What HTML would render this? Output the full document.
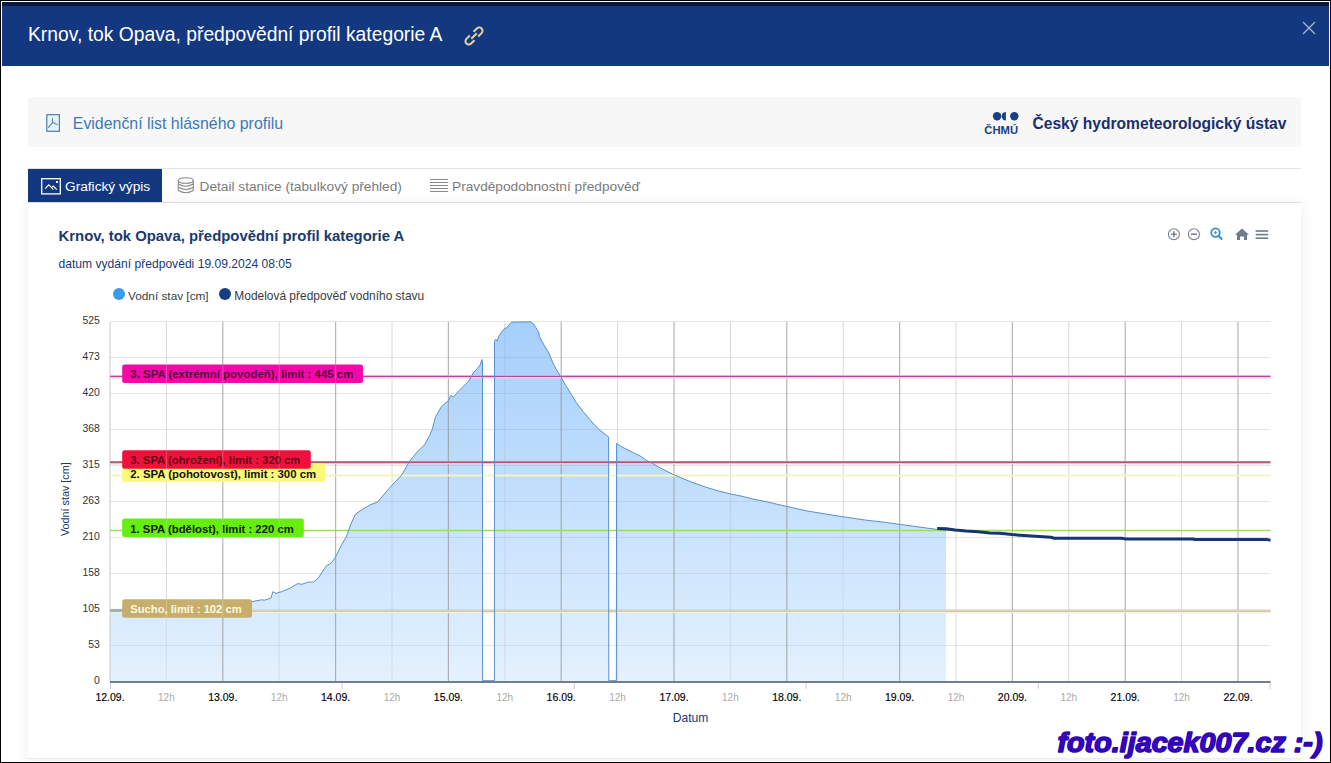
<!DOCTYPE html>
<html><head><meta charset="utf-8">
<style>
html,body{margin:0;padding:0;}
body{width:1331px;height:763px;overflow:hidden;position:relative;background:#fff;font-family:"Liberation Sans",sans-serif;}
.abs{position:absolute;}
#frame{position:absolute;left:0;top:0;width:1329px;height:761px;border:1px solid #000;}
#hdr{position:absolute;left:2px;top:2px;width:1327px;height:63.5px;background:#14387f;}
#hdrtop{position:absolute;left:2px;top:2px;width:1327px;height:4px;background:#08173d;}
#title{position:absolute;left:28px;top:23px;font-size:19.3px;color:#fff;white-space:nowrap;line-height:24px;}
#bar{position:absolute;left:28px;top:97px;width:1273px;height:50px;background:#f7f7f7;}
#evid{position:absolute;left:72.8px;top:113.8px;font-size:15.9px;color:#3a7ab8;white-space:nowrap;line-height:20px;}
#chmu{position:absolute;left:1032.5px;top:113.5px;font-size:15.6px;font-weight:bold;color:#19306c;white-space:nowrap;line-height:20px;}
#tabline1{position:absolute;left:28px;top:168px;width:1273px;height:1px;background:#e3e3e3;}
#tabline2{position:absolute;left:28px;top:202px;width:1273px;height:1px;background:#e3e3e3;}
#tab1{position:absolute;left:28px;top:169px;width:134px;height:33px;background:#14387f;}
.tabt{position:absolute;top:178px;font-size:13.7px;white-space:nowrap;line-height:18px;}
#card{position:absolute;left:28px;top:203px;width:1273px;height:556px;background:#fff;box-shadow:0 1px 13px rgba(0,0,0,0.075);}
#cardbot{position:absolute;left:28px;top:758px;width:1273px;height:1px;background:#ececec;}
svg text{font-family:"Liberation Sans",sans-serif;}
.gh{stroke:#e6e6e6;stroke-width:1;}
.fg line{stroke:rgba(110,120,140,0.14)!important;}
.gd{stroke:rgba(150,150,150,0.7);stroke-width:1.2;}
.g12{stroke:rgba(190,190,190,0.6);stroke-width:1;}
.yl{font-size:10.4px;fill:#333;text-anchor:end;}
.xd{font-size:10.5px;fill:#000;text-anchor:middle;stroke:#000;stroke-width:0.15px;}
.xh{font-size:10px;fill:#aaaaaa;text-anchor:middle;}
.wl line{stroke:rgba(255,255,255,0.22)!important;}
.al{font-weight:bold;}
#wm{position:absolute;left:1057px;top:724px;font-size:30px;font-weight:bold;font-style:italic;color:#3b12c4;white-space:nowrap;line-height:36px;font-family:"Liberation Sans",sans-serif;letter-spacing:-0.5px;}
</style></head><body>
<div id="frame"></div>
<div id="hdr"></div>
<div id="hdrtop"></div>
<div id="title">Krnov, tok Opava, předpovědní profil kategorie A</div>
<svg class="abs" style="left:0;top:0" width="1331" height="80">
  <!-- link icon -->
  <g transform="translate(474,36) rotate(-45)" fill="none" stroke="#e3d39c" stroke-width="2" stroke-linecap="butt">
    <path d="M2.6,-3.3 L7.4,-3.3 A3.3,3.3 0 0 1 7.4,3.3 L2.6,3.3"/>
    <path d="M-2.6,-3.3 L-7.4,-3.3 A3.3,3.3 0 0 0 -7.4,3.3 L-2.6,3.3"/>
    <path d="M-3.8,0 L3.9,0"/>
  </g>
  <g stroke="#a9b6d6" stroke-width="1.2">
    <line x1="1303" y1="22" x2="1315" y2="34"/><line x1="1315" y1="22" x2="1303" y2="34"/>
  </g>
</svg>
<div id="bar"></div>
<svg class="abs" style="left:0;top:90px" width="1331" height="60">
  <!-- pdf icon -->
  <rect x="46.8" y="24.7" width="12.6" height="16.6" fill="#e6f4fa" stroke="#4f7ea6" stroke-width="1.2"/>
  <g fill="none" stroke="#5a86ad" stroke-width="1.1" stroke-linecap="round">
    <path d="M52.4,28.4 L52.4,32.6 L48.6,37.4 M52.4,32.6 L57.4,34.4"/>
  </g>
  <!-- CHMU logo -->
  <g fill="#1c3e85">
    <circle cx="997.1" cy="26.2" r="4.2"/>
    <path d="M1005.9,22 A4.2,4.2 0 0 0 1005.9,30.4 Z"/>
    <circle cx="1014.3" cy="26.2" r="4.2"/>
  </g>
  <text x="984.3" y="43.7" font-size="10.4" font-weight="bold" fill="#1c3e85" textLength="33.8" lengthAdjust="spacingAndGlyphs" style="font-family:'Liberation Sans',sans-serif">ČHMÚ</text>
</svg>
<div id="evid">Evidenční list hlásného profilu</div>
<div id="chmu">Český hydrometeorologický ústav</div>
<div id="tabline1"></div>
<div id="tab1"></div>
<div id="tabline2"></div>
<svg class="abs" style="left:0;top:165px" width="700" height="40">
  <!-- graph icon -->
  <rect x="41.7" y="13.7" width="18.6" height="15.2" fill="none" stroke="#fff" stroke-width="1.3"/>
  <path d="M45.2,23.6 L48.8,19.9 L53.4,24.6 M51.6,22.6 L53.3,21 L56.8,24.6" fill="none" stroke="#fff" stroke-width="1.1"/>
  <rect x="56" y="16" width="2" height="2" fill="#fff"/>
  <!-- db icon -->
  <g fill="none" stroke="#888" stroke-width="1.1">
    <ellipse cx="185.8" cy="15.5" rx="7.5" ry="2.8"/>
    <path d="M178.3,15.5 V25.5 Q185.8,30 193.3,25.5 V15.5"/>
    <path d="M178.3,19 Q185.8,23.5 193.3,19"/>
    <path d="M178.3,22.3 Q185.8,26.8 193.3,22.3"/>
  </g>
  <!-- list icon -->
  <g stroke="#888" stroke-width="1">
    <line x1="430" y1="14.5" x2="448" y2="14.5"/>
    <line x1="430" y1="17.5" x2="448" y2="17.5"/>
    <line x1="430" y1="20.5" x2="448" y2="20.5"/>
    <line x1="430" y1="23.5" x2="448" y2="23.5"/>
    <line x1="430" y1="26.5" x2="448" y2="26.5"/>
  </g>
</svg>
<div class="tabt" style="left:65px;color:#fff">Grafický výpis</div>
<div class="tabt" style="left:199.5px;color:#7b7b7b">Detail stanice (tabulkový přehled)</div>
<div class="tabt" style="left:452px;color:#7b7b7b">Pravděpodobnostní předpověď</div>
<div id="card"></div>
<div id="cardbot"></div>
<svg class="abs" style="left:0;top:0" width="1331" height="763">
  <defs>
    <linearGradient id="gf" x1="0" y1="322" x2="0" y2="682" gradientUnits="userSpaceOnUse">
      <stop offset="0" stop-color="#a5cffb"/>
      <stop offset="1" stop-color="#e4f1fe"/>
    </linearGradient>
    <clipPath id="boxclip"><rect x="122.2" y="364.4" width="240.8" height="18.5"/><rect x="122.2" y="463.6" width="202.9" height="18.5"/><rect x="122.2" y="450.2" width="188.6" height="18.5"/><rect x="122.2" y="518.5" width="181.6" height="18.5"/><rect x="122.2" y="599.2" width="129.8" height="18.5"/></clipPath>
    <clipPath id="fillclip"><path d="M110,682 L110,611.2 122,611 160,607.5 200,605 230,603 252.3,601.6 261.6,599.8 264.5,600.2 271,598 272.9,591.6 276,593.4 281.8,591.6 290.5,587.9 297.7,583.6 302,584.3 307.8,582.2 313.5,581.9 317.9,578.6 322.2,572.1 326.5,565.6 330.8,563.4 335.2,557.7 340.9,546.1 346.7,536 351,523.8 355.3,514.4 362.5,509.4 369.8,505 377.7,501.9 387,490.8 395.6,481.4 401.5,475.4 409.2,461.8 416,453.3 424.5,444.8 429.7,435.4 432.2,429.4 435.6,416.6 441.6,406.4 448.4,400.5 451,395.3 453.5,397 458.6,391.1 468.9,380.9 473.7,372.4 477.3,368.7 480.1,365 481.9,359.5 482.5,362 482.6,680.7 494.4,680.7 494.5,340.6 495.8,339.2 497.1,341.2 499.1,336 501.7,332 504.3,328.8 507,327.5 508.9,324.8 511.6,322.2 522.7,321.9 530.6,321.9 533.2,323.5 535.8,327.5 537.8,330.7 538.8,332.7 539.4,336.6 543.7,344.5 548.9,353 552.9,362.9 556.8,370.1 560.7,376.6 566,385.8 571.2,394.3 576.5,402.9 583,411.4 589.6,419.3 594.8,425.2 600.1,430.4 605.3,434.3 608.6,437 608.8,680.7 616.4,680.7 616.6,443.4 622,447 628,450 634,453 641.3,456.6 646.1,460.2 652.1,463.2 660.5,468.1 672.5,474.1 682.1,478.3 694.1,483.1 706.2,487.3 718.2,490.9 730.2,493.9 742.2,496.3 754.2,499.3 765,501.4 786.4,506.4 807.8,511.1 829.2,514.6 843.5,516.8 864.9,520 886.3,522.5 900.6,524.5 922,527.4 936.3,529.3 946,530.5 L946,682 Z"/></clipPath>
  </defs>
  <text x="58.5" y="241" font-size="14.9" font-weight="bold" fill="#1a3a6e">Krnov, tok Opava, předpovědní profil kategorie A</text>
  <text x="58.5" y="267.6" font-size="12.1" fill="#1a3a6e">datum vydání předpovědi 19.09.2024 08:05</text>
  <circle cx="119" cy="294" r="6" fill="#3a9af0"/>
  <text x="128" y="300" font-size="11.8" fill="#373d3f">Vodní stav [cm]</text>
  <circle cx="225" cy="294" r="6" fill="#173d84"/>
  <text x="234.3" y="300" font-size="11.95" fill="#373d3f">Modelová předpověď vodního stavu</text>
  <!-- toolbar -->
  <g fill="none" stroke="#6e7b8b" stroke-width="1.05">
    <circle cx="1173.9" cy="234.2" r="5.5"/>
    <line x1="1170.9" y1="234.2" x2="1176.9" y2="234.2" stroke-width="1.3"/>
    <line x1="1173.9" y1="231.2" x2="1173.9" y2="237.2" stroke-width="1.5"/>
    <circle cx="1193.9" cy="234.2" r="5.5"/>
    <line x1="1190.9" y1="234.2" x2="1196.9" y2="234.2" stroke-width="1.5"/>
  </g>
  <g fill="none" stroke="#2f8fd6" stroke-width="1.8">
    <circle cx="1215.5" cy="232.6" r="4.3"/>
    <line x1="1218.6" y1="235.8" x2="1222.3" y2="239.6" stroke-width="2"/>
  </g>
  <g stroke="#2f8fd6" stroke-width="0.9"><line x1="1213.8" y1="232.6" x2="1217.2" y2="232.6"/><line x1="1215.5" y1="230.9" x2="1215.5" y2="234.3"/></g>
  <path d="M1242,228.5 L1249,234.8 L1247,234.8 L1247,240 L1244,240 L1244,236.5 L1240,236.5 L1240,240 L1237,240 L1237,234.8 L1235,234.8 Z" fill="#6e7b8b"/>
  <g stroke="#6e7b8b" stroke-width="1.6">
    <line x1="1255.6" y1="231" x2="1268.2" y2="231"/>
    <line x1="1255.6" y1="234.6" x2="1268.2" y2="234.6"/>
    <line x1="1255.6" y1="238.2" x2="1268.2" y2="238.2"/>
  </g>
  <!-- plot -->
  <line x1="110" y1="321.5" x2="1270.5" y2="321.5" class="gh"/>
<line x1="110" y1="357.5" x2="1270.5" y2="357.5" class="gh"/>
<line x1="110" y1="393.5" x2="1270.5" y2="393.5" class="gh"/>
<line x1="110" y1="429.5" x2="1270.5" y2="429.5" class="gh"/>
<line x1="110" y1="465.5" x2="1270.5" y2="465.5" class="gh"/>
<line x1="110" y1="501.5" x2="1270.5" y2="501.5" class="gh"/>
<line x1="110" y1="537.5" x2="1270.5" y2="537.5" class="gh"/>
<line x1="110" y1="573.5" x2="1270.5" y2="573.5" class="gh"/>
<line x1="110" y1="609.5" x2="1270.5" y2="609.5" class="gh"/>
<line x1="110" y1="645.5" x2="1270.5" y2="645.5" class="gh"/>
<line x1="110" y1="681.5" x2="1270.5" y2="681.5" class="gh"/>
  <line x1="166.4" y1="322" x2="166.4" y2="682" class="g12"/>
<line x1="279.2" y1="322" x2="279.2" y2="682" class="g12"/>
<line x1="392.0" y1="322" x2="392.0" y2="682" class="g12"/>
<line x1="504.8" y1="322" x2="504.8" y2="682" class="g12"/>
<line x1="617.6" y1="322" x2="617.6" y2="682" class="g12"/>
<line x1="730.4" y1="322" x2="730.4" y2="682" class="g12"/>
<line x1="843.2" y1="322" x2="843.2" y2="682" class="g12"/>
<line x1="956.0" y1="322" x2="956.0" y2="682" class="g12"/>
<line x1="1068.8" y1="322" x2="1068.8" y2="682" class="g12"/>
<line x1="1181.6" y1="322" x2="1181.6" y2="682" class="g12"/>
  <path d="M110,682 L110,611.2 122,611 160,607.5 200,605 230,603 252.3,601.6 261.6,599.8 264.5,600.2 271,598 272.9,591.6 276,593.4 281.8,591.6 290.5,587.9 297.7,583.6 302,584.3 307.8,582.2 313.5,581.9 317.9,578.6 322.2,572.1 326.5,565.6 330.8,563.4 335.2,557.7 340.9,546.1 346.7,536 351,523.8 355.3,514.4 362.5,509.4 369.8,505 377.7,501.9 387,490.8 395.6,481.4 401.5,475.4 409.2,461.8 416,453.3 424.5,444.8 429.7,435.4 432.2,429.4 435.6,416.6 441.6,406.4 448.4,400.5 451,395.3 453.5,397 458.6,391.1 468.9,380.9 473.7,372.4 477.3,368.7 480.1,365 481.9,359.5 482.5,362 482.6,680.7 494.4,680.7 494.5,340.6 495.8,339.2 497.1,341.2 499.1,336 501.7,332 504.3,328.8 507,327.5 508.9,324.8 511.6,322.2 522.7,321.9 530.6,321.9 533.2,323.5 535.8,327.5 537.8,330.7 538.8,332.7 539.4,336.6 543.7,344.5 548.9,353 552.9,362.9 556.8,370.1 560.7,376.6 566,385.8 571.2,394.3 576.5,402.9 583,411.4 589.6,419.3 594.8,425.2 600.1,430.4 605.3,434.3 608.6,437 608.8,680.7 616.4,680.7 616.6,443.4 622,447 628,450 634,453 641.3,456.6 646.1,460.2 652.1,463.2 660.5,468.1 672.5,474.1 682.1,478.3 694.1,483.1 706.2,487.3 718.2,490.9 730.2,493.9 742.2,496.3 754.2,499.3 765,501.4 786.4,506.4 807.8,511.1 829.2,514.6 843.5,516.8 864.9,520 886.3,522.5 900.6,524.5 922,527.4 936.3,529.3 946,530.5 L946,682 Z" fill="url(#gf)"/>
  <g clip-path="url(#fillclip)" class="fg"><line x1="166.4" y1="322" x2="166.4" y2="682" class="g12"/>
<line x1="279.2" y1="322" x2="279.2" y2="682" class="g12"/>
<line x1="392.0" y1="322" x2="392.0" y2="682" class="g12"/>
<line x1="504.8" y1="322" x2="504.8" y2="682" class="g12"/>
<line x1="617.6" y1="322" x2="617.6" y2="682" class="g12"/>
<line x1="730.4" y1="322" x2="730.4" y2="682" class="g12"/>
<line x1="843.2" y1="322" x2="843.2" y2="682" class="g12"/>
<line x1="956.0" y1="322" x2="956.0" y2="682" class="g12"/>
<line x1="1068.8" y1="322" x2="1068.8" y2="682" class="g12"/>
<line x1="1181.6" y1="322" x2="1181.6" y2="682" class="g12"/></g>
  <line x1="222.8" y1="322" x2="222.8" y2="682" class="gd"/>
<line x1="335.6" y1="322" x2="335.6" y2="682" class="gd"/>
<line x1="448.4" y1="322" x2="448.4" y2="682" class="gd"/>
<line x1="561.2" y1="322" x2="561.2" y2="682" class="gd"/>
<line x1="674.0" y1="322" x2="674.0" y2="682" class="gd"/>
<line x1="786.8" y1="322" x2="786.8" y2="682" class="gd"/>
<line x1="899.6" y1="322" x2="899.6" y2="682" class="gd"/>
<line x1="1012.4" y1="322" x2="1012.4" y2="682" class="gd"/>
<line x1="1125.2" y1="322" x2="1125.2" y2="682" class="gd"/>
<line x1="1238.0" y1="322" x2="1238.0" y2="682" class="gd"/>
  <line x1="110" y1="322" x2="110" y2="682" stroke="#c8c8c8" stroke-width="1"/>
  <line x1="110" y1="376.79999999999995" x2="1270.5" y2="376.79999999999995" stroke="#fbc4ee" stroke-width="3.2"/>
<line x1="110" y1="376.4" x2="1270.5" y2="376.4" stroke="#b5489a" stroke-width="1.3"/>
<line x1="110" y1="475.6" x2="1270.5" y2="475.6" stroke="#f5f5c2" stroke-width="2"/>
<line x1="110" y1="462.59999999999997" x2="1270.5" y2="462.59999999999997" stroke="#f3bfd2" stroke-width="3.2"/>
<line x1="110" y1="462.2" x2="1270.5" y2="462.2" stroke="#963656" stroke-width="1.3"/>
<line x1="110" y1="530.5" x2="1270.5" y2="530.5" stroke="#98e060" stroke-width="1.6"/>
<line x1="110" y1="611.6" x2="1270.5" y2="611.6" stroke="#f4efdc" stroke-width="3.2"/>
<line x1="110" y1="611.2" x2="1270.5" y2="611.2" stroke="#c6bb96" stroke-width="1.3"/>
  <g clip-path="url(#fillclip)" class="fg"><line x1="110" y1="321.5" x2="1270.5" y2="321.5" class="gh"/>
<line x1="110" y1="357.5" x2="1270.5" y2="357.5" class="gh"/>
<line x1="110" y1="393.5" x2="1270.5" y2="393.5" class="gh"/>
<line x1="110" y1="429.5" x2="1270.5" y2="429.5" class="gh"/>
<line x1="110" y1="465.5" x2="1270.5" y2="465.5" class="gh"/>
<line x1="110" y1="501.5" x2="1270.5" y2="501.5" class="gh"/>
<line x1="110" y1="537.5" x2="1270.5" y2="537.5" class="gh"/>
<line x1="110" y1="573.5" x2="1270.5" y2="573.5" class="gh"/>
<line x1="110" y1="609.5" x2="1270.5" y2="609.5" class="gh"/>
<line x1="110" y1="645.5" x2="1270.5" y2="645.5" class="gh"/>
<line x1="110" y1="681.5" x2="1270.5" y2="681.5" class="gh"/></g>
  <path d="M110,611.2 122,611 160,607.5 200,605 230,603 252.3,601.6 261.6,599.8 264.5,600.2 271,598 272.9,591.6 276,593.4 281.8,591.6 290.5,587.9 297.7,583.6 302,584.3 307.8,582.2 313.5,581.9 317.9,578.6 322.2,572.1 326.5,565.6 330.8,563.4 335.2,557.7 340.9,546.1 346.7,536 351,523.8 355.3,514.4 362.5,509.4 369.8,505 377.7,501.9 387,490.8 395.6,481.4 401.5,475.4 409.2,461.8 416,453.3 424.5,444.8 429.7,435.4 432.2,429.4 435.6,416.6 441.6,406.4 448.4,400.5 451,395.3 453.5,397 458.6,391.1 468.9,380.9 473.7,372.4 477.3,368.7 480.1,365 481.9,359.5 482.5,362 482.6,680.7 494.4,680.7 494.5,340.6 495.8,339.2 497.1,341.2 499.1,336 501.7,332 504.3,328.8 507,327.5 508.9,324.8 511.6,322.2 522.7,321.9 530.6,321.9 533.2,323.5 535.8,327.5 537.8,330.7 538.8,332.7 539.4,336.6 543.7,344.5 548.9,353 552.9,362.9 556.8,370.1 560.7,376.6 566,385.8 571.2,394.3 576.5,402.9 583,411.4 589.6,419.3 594.8,425.2 600.1,430.4 605.3,434.3 608.6,437 608.8,680.7 616.4,680.7 616.6,443.4 622,447 628,450 634,453 641.3,456.6 646.1,460.2 652.1,463.2 660.5,468.1 672.5,474.1 682.1,478.3 694.1,483.1 706.2,487.3 718.2,490.9 730.2,493.9 742.2,496.3 754.2,499.3 765,501.4 786.4,506.4 807.8,511.1 829.2,514.6 843.5,516.8 864.9,520 886.3,522.5 900.6,524.5 922,527.4 936.3,529.3 946,530.5" fill="none" stroke="#5a8fcc" stroke-width="1" stroke-linejoin="round"/>
  <path d="M937.2,528.4 946.2,528.7 955.2,529.9 966.1,531.1 978.1,531.7 990.1,532.9 1000,533.2 1012,534.6 1024,535.5 1039.1,536.4 1051.1,537.3 1054.1,538.2 1068.8,538.3 1122,538.3 1125,538.9 1193.5,538.9 1194.3,539.4 1266.4,539.4 1270.5,540.2" fill="none" stroke="#17356f" stroke-width="3" stroke-linejoin="round" stroke-linecap="butt"/>
  <line x1="110.5" y1="610.4" x2="124" y2="610.4" stroke="#a2b2ba" stroke-width="3"/>
  <rect x="122.2" y="364.4" width="240.8" height="18.5" rx="2.5" fill="#f00aa8"/><text x="130.3" y="378.4" class="al" font-size="11.45" fill="rgba(60,0,40,0.85)">3. SPA (extrémní povodeň), limit : 445 cm</text>
<rect x="122.2" y="463.6" width="202.9" height="18.5" rx="2.5" fill="#fafa78"/><text x="130.3" y="477.6" class="al" font-size="11.39" fill="#111">2. SPA (pohotovost), limit : 300 cm</text>
<rect x="122.2" y="450.2" width="188.6" height="18.5" rx="2.5" fill="#f0103c"/><text x="130.3" y="464.2" class="al" font-size="11.3" fill="rgba(70,0,10,0.85)">3. SPA (ohrožení), limit : 320 cm</text>
<rect x="122.2" y="518.5" width="181.6" height="18.5" rx="2.5" fill="#66ee11"/><text x="130.3" y="532.5" class="al" font-size="11.32" fill="#102000">1. SPA (bdělost), limit : 220 cm</text>
<rect x="122.2" y="599.2" width="129.8" height="18.5" rx="2.5" fill="#c7ae6c"/><text x="130.3" y="613.2" class="al" font-size="11.2" fill="#fdf8e0">Sucho, limit : 102 cm</text>
  <g clip-path="url(#boxclip)"><g class="wl"><line x1="222.8" y1="322" x2="222.8" y2="682" class="gd"/>
<line x1="335.6" y1="322" x2="335.6" y2="682" class="gd"/>
<line x1="448.4" y1="322" x2="448.4" y2="682" class="gd"/>
<line x1="561.2" y1="322" x2="561.2" y2="682" class="gd"/>
<line x1="674.0" y1="322" x2="674.0" y2="682" class="gd"/>
<line x1="786.8" y1="322" x2="786.8" y2="682" class="gd"/>
<line x1="899.6" y1="322" x2="899.6" y2="682" class="gd"/>
<line x1="1012.4" y1="322" x2="1012.4" y2="682" class="gd"/>
<line x1="1125.2" y1="322" x2="1125.2" y2="682" class="gd"/>
<line x1="1238.0" y1="322" x2="1238.0" y2="682" class="gd"/>
<line x1="166.4" y1="322" x2="166.4" y2="682" class="g12"/>
<line x1="279.2" y1="322" x2="279.2" y2="682" class="g12"/>
<line x1="392.0" y1="322" x2="392.0" y2="682" class="g12"/>
<line x1="504.8" y1="322" x2="504.8" y2="682" class="g12"/>
<line x1="617.6" y1="322" x2="617.6" y2="682" class="g12"/>
<line x1="730.4" y1="322" x2="730.4" y2="682" class="g12"/>
<line x1="843.2" y1="322" x2="843.2" y2="682" class="g12"/>
<line x1="956.0" y1="322" x2="956.0" y2="682" class="g12"/>
<line x1="1068.8" y1="322" x2="1068.8" y2="682" class="g12"/>
<line x1="1181.6" y1="322" x2="1181.6" y2="682" class="g12"/></g></g>
  <line x1="110" y1="682" x2="1270.5" y2="682" stroke="#727d8d" stroke-width="1.9"/>
  <g stroke="#c8ccd4" stroke-width="1">
    <line x1="110.5" y1="683" x2="110.5" y2="689"/><line x1="342" y1="683" x2="342" y2="689"/><line x1="574.3" y1="683" x2="574.3" y2="689"/><line x1="806" y1="683" x2="806" y2="689"/><line x1="1038.3" y1="683" x2="1038.3" y2="689"/><line x1="1270" y1="683" x2="1270" y2="689"/>
  </g>
  <text x="99.8" y="683.8" class="yl">0</text>
<text x="99.8" y="647.8" class="yl">53</text>
<text x="99.8" y="611.8" class="yl">105</text>
<text x="99.8" y="575.8" class="yl">158</text>
<text x="99.8" y="539.8" class="yl">210</text>
<text x="99.8" y="503.8" class="yl">263</text>
<text x="99.8" y="467.8" class="yl">315</text>
<text x="99.8" y="431.8" class="yl">368</text>
<text x="99.8" y="395.8" class="yl">420</text>
<text x="99.8" y="359.8" class="yl">473</text>
<text x="99.8" y="323.8" class="yl">525</text>
  <text x="110.0" y="701.2" class="xd">12.09.</text>
<text x="166.4" y="701.2" class="xh">12h</text>
<text x="222.8" y="701.2" class="xd">13.09.</text>
<text x="279.2" y="701.2" class="xh">12h</text>
<text x="335.6" y="701.2" class="xd">14.09.</text>
<text x="392.0" y="701.2" class="xh">12h</text>
<text x="448.4" y="701.2" class="xd">15.09.</text>
<text x="504.8" y="701.2" class="xh">12h</text>
<text x="561.2" y="701.2" class="xd">16.09.</text>
<text x="617.6" y="701.2" class="xh">12h</text>
<text x="674.0" y="701.2" class="xd">17.09.</text>
<text x="730.4" y="701.2" class="xh">12h</text>
<text x="786.8" y="701.2" class="xd">18.09.</text>
<text x="843.2" y="701.2" class="xh">12h</text>
<text x="899.6" y="701.2" class="xd">19.09.</text>
<text x="956.0" y="701.2" class="xh">12h</text>
<text x="1012.4" y="701.2" class="xd">20.09.</text>
<text x="1068.8" y="701.2" class="xh">12h</text>
<text x="1125.2" y="701.2" class="xd">21.09.</text>
<text x="1181.6" y="701.2" class="xh">12h</text>
<text x="1238.0" y="701.2" class="xd">22.09.</text>
  <text x="690.5" y="721.7" font-size="12.1" fill="#1a3a6e" text-anchor="middle">Datum</text>
  <text transform="translate(68.8,499.2) rotate(-90)" font-size="10.8" fill="#1a3a6e" text-anchor="middle">Vodní stav [cm]</text>
</svg>
<svg class="abs" style="left:0;top:700px" width="1331" height="63"><text x="1057.5" y="52.2" font-size="28.5" font-weight="bold" font-style="italic" fill="#3505c8" stroke="#2e04b0" stroke-width="1.6" stroke-linejoin="round" textLength="265" lengthAdjust="spacingAndGlyphs">foto.ijacek007.cz :-)</text></svg>
</body></html>
